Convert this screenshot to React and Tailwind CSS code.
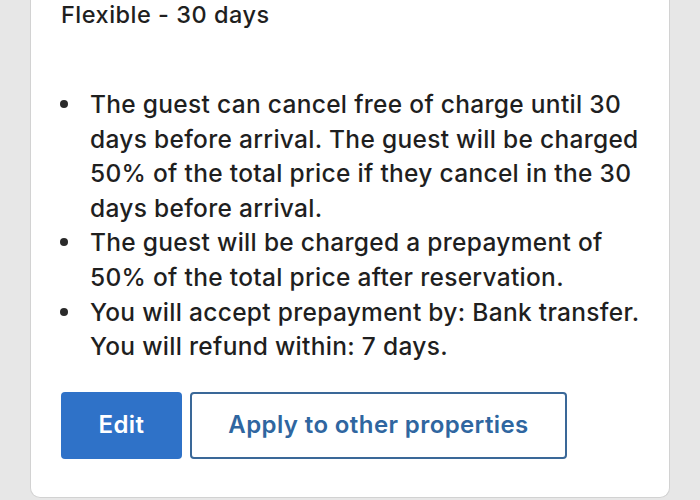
export default function App() {
  const items = [
    "The guest can cancel free of charge until 30 days before arrival. The guest will be charged 50% of the total price if they cancel in the 30 days before arrival.",
    "The guest will be charged a prepayment of 50% of the total price after reservation.",
    "You will accept prepayment by: Bank transfer. You will refund within: 7 days.",
  ];
  return (
    <div className="w-[700px] h-[500px] bg-[#e7e7e7] px-[30px] overflow-hidden tracking-[0.3px]" style={{ fontFamily: "Inter, 'Noto Sans', sans-serif" }}>
      <div className="h-[498px] bg-white border-x border-b border-[#d2d2d2] rounded-b-[10px] pl-[30px] pr-[24px] flex flex-col">
        <div className="text-[23.5px] leading-[30px] text-[#1f1f1f] font-medium tracking-[0.5px]">Flexible - 30 days</div>
        <ul className="mt-[57px] flex flex-col text-[#1f1f1f] text-[24.5px] leading-[34.6px] font-medium">
          {items.map((t, i) => (
            <li key={i} className="flex">
              <div className="w-[29px] shrink-0 flex pt-[13px]">
                <span className="block w-[8px] h-[8px] rounded-full bg-[#2a2a2a] -ml-[1px]" />
              </div>
              <span>{t}</span>
            </li>
          ))}
        </ul>
        <div className="mt-[28px] flex gap-[8px]">
          <button className="w-[121px] h-[67px] rounded-[4px] bg-[#2f72c8] text-white text-[24px] font-semibold tracking-[0.4px]">Edit</button>
          <button className="w-[377px] h-[67px] rounded-[4px] border-2 border-[#3a6898] bg-white text-[#2f66a0] text-[24px] font-semibold tracking-[0.4px]">Apply to other properties</button>
        </div>
      </div>
    </div>
  );
}
